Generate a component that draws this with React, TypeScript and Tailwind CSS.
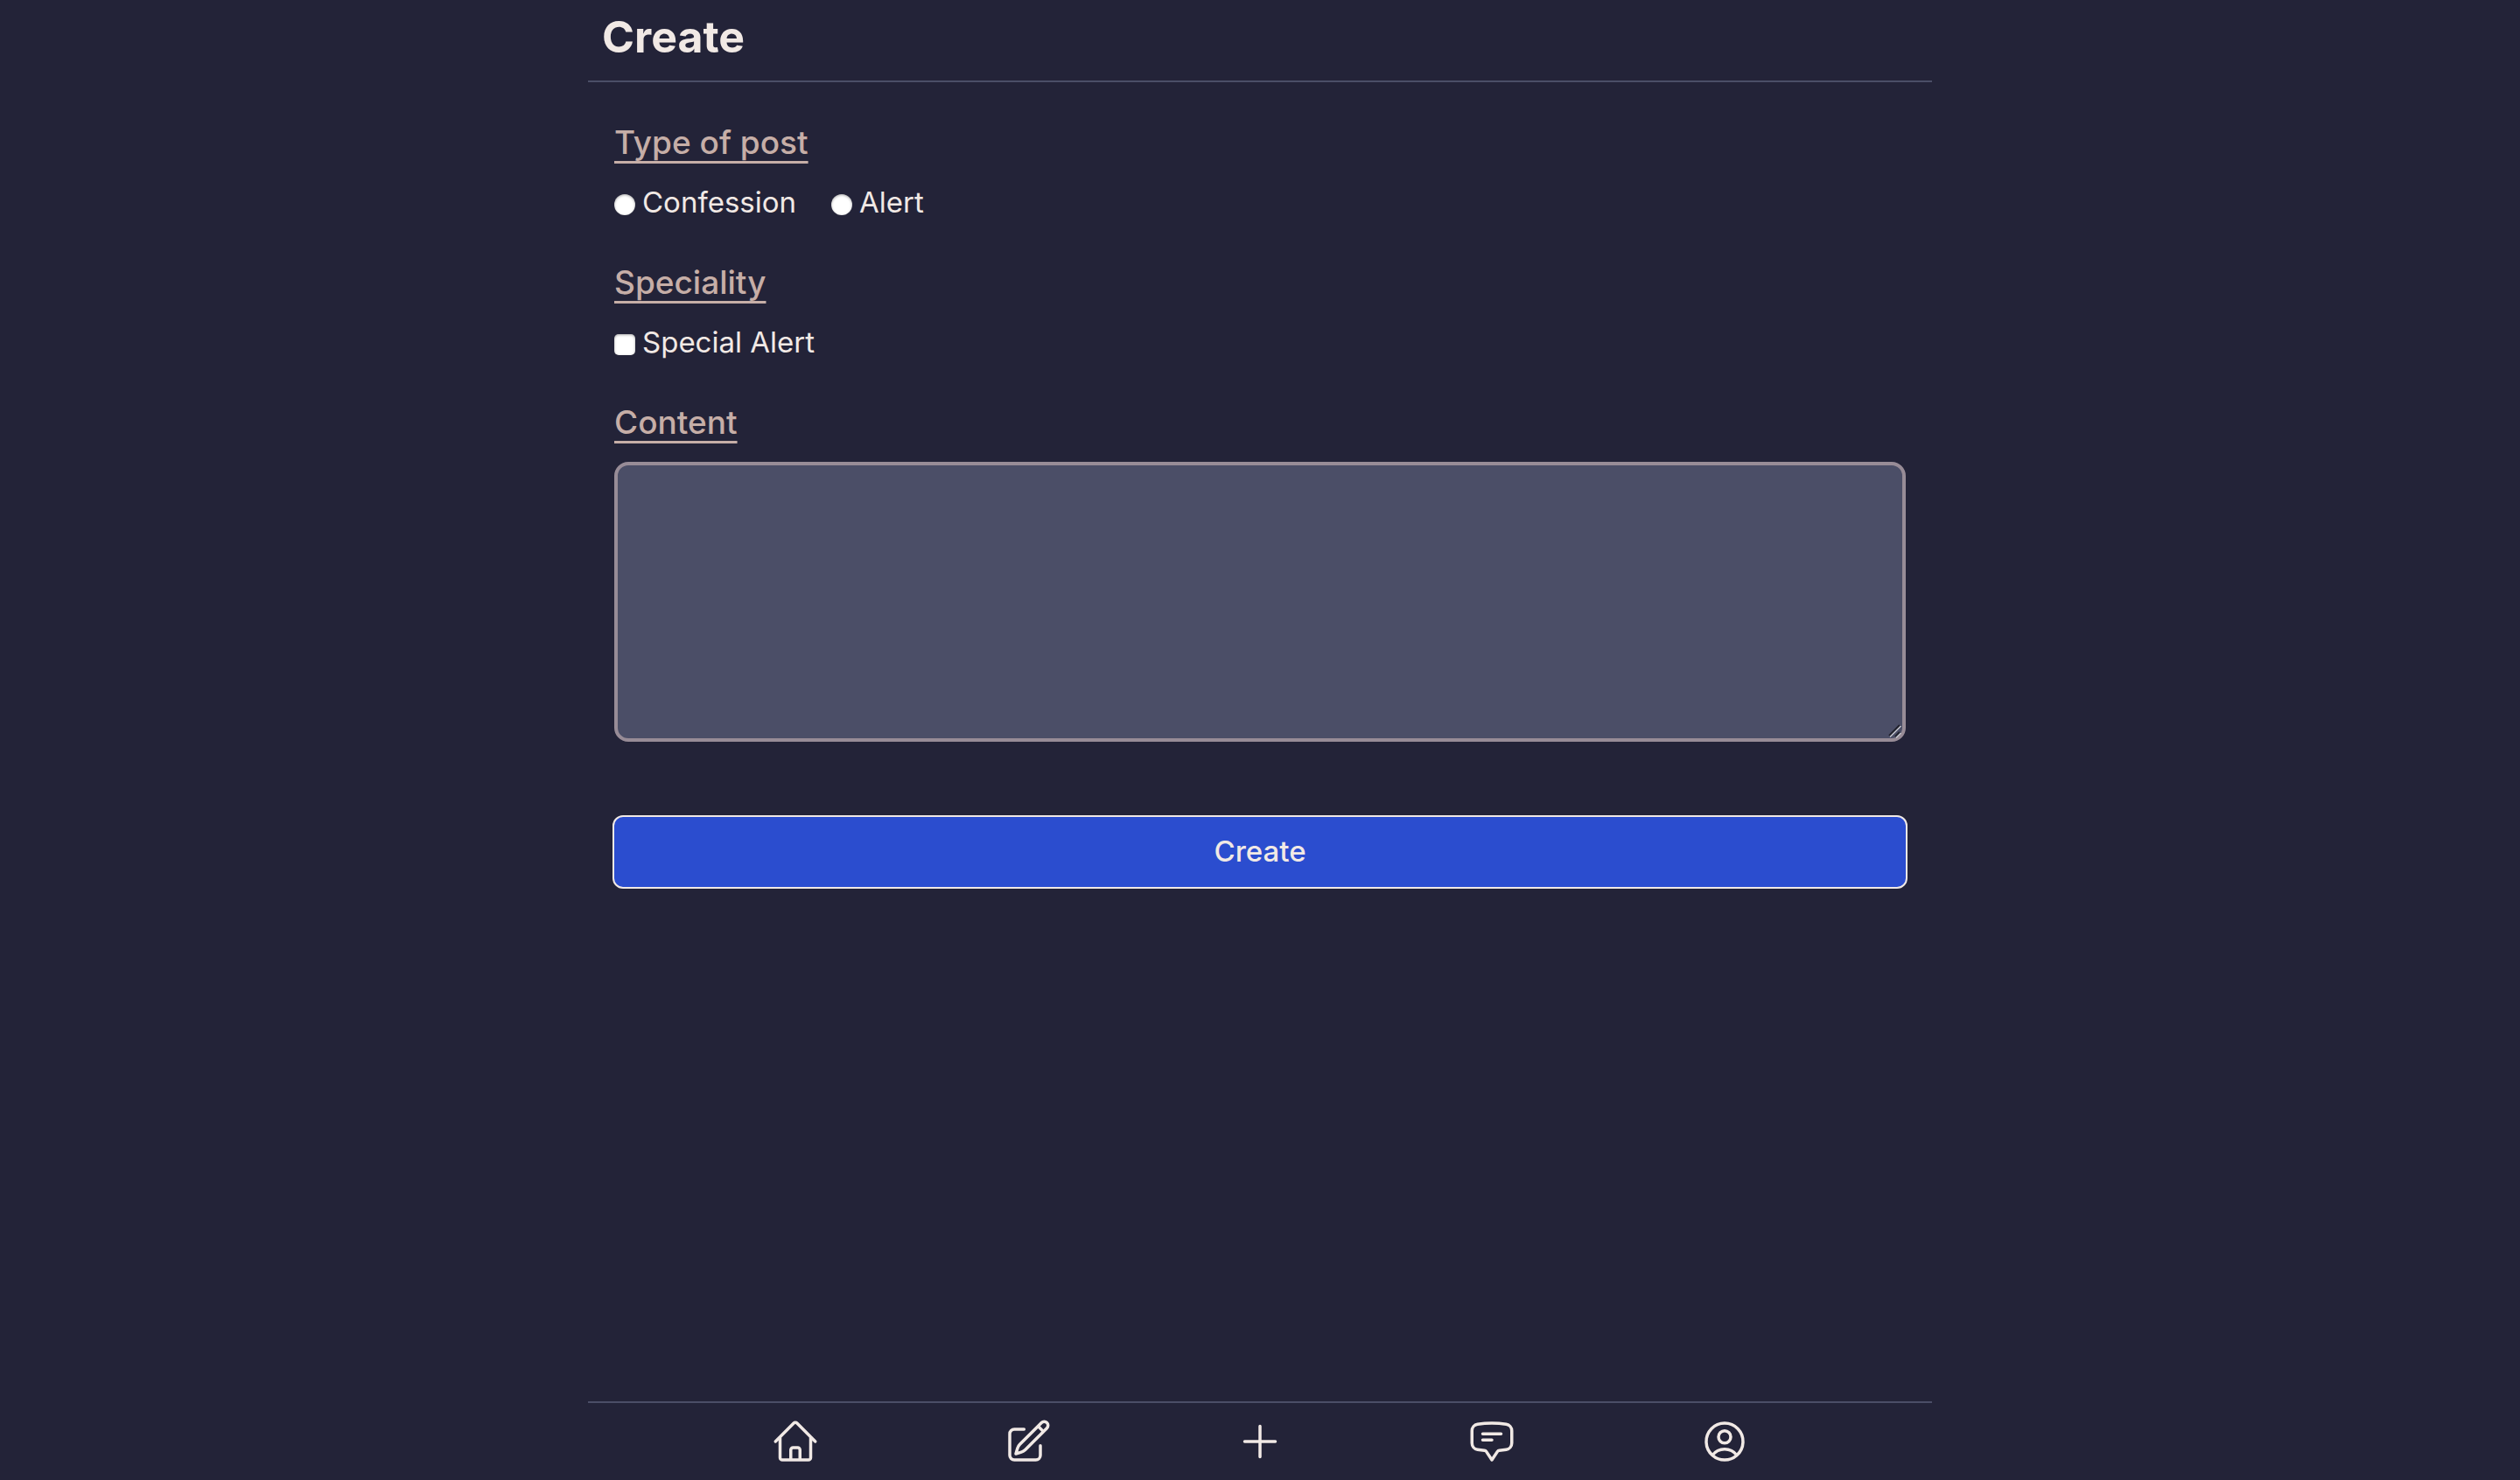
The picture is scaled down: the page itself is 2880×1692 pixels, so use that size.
import type { ReactNode } from "react";
import {
  HiOutlineChatBubbleBottomCenterText,
  HiOutlineHome,
  HiOutlinePencilSquare,
  HiOutlinePlus,
  HiOutlineUserCircle,
} from "react-icons/hi2";

const inputBase =
  "mt-1.5 size-6 shrink-0 appearance-none bg-white shadow-[inset_0_1px_3px_rgba(0,0,0,0.35)] checked:bg-[#2b4dcf]";

const links = [
  { label: "Home", href: "#home", Icon: HiOutlineHome },
  { label: "Write", href: "#write", Icon: HiOutlinePencilSquare },
  { label: "Create", href: "#create", Icon: HiOutlinePlus },
  { label: "Messages", href: "#messages", Icon: HiOutlineChatBubbleBottomCenterText },
  { label: "Profile", href: "#profile", Icon: HiOutlineUserCircle },
];

const headingClass =
  "mb-4 text-[37px] leading-[58px] font-medium text-[#c6aea7] underline decoration-[3px] underline-offset-8 [text-decoration-skip-ink:none]";

function Group({ title, children }: { title: string; children: ReactNode }) {
  return (
    <fieldset className="mx-0.5 mb-10">
      <legend className={headingClass}>{title}</legend>
      <div className="flex gap-10 text-[33px] leading-[46px]">{children}</div>
    </fieldset>
  );
}

export default function App() {
  return (
    <div className="min-h-screen bg-[#232338] font-['Inter',sans-serif] text-[#f1e9e5]">
      <div className="mx-auto flex min-h-screen max-w-[1536px] flex-col">
        <header className="border-b-2 border-[#4b4e67] px-4 pt-1.5 pb-3.5">
          <h1 className="text-[50px] leading-[72px] font-bold">Create</h1>
        </header>

        <form className="flex flex-col px-7 pt-10" onSubmit={(e) => e.preventDefault()}>
          <Group title="Type of post">
            <label className="flex items-center gap-2">
              <input type="radio" name="type" className={`rounded-full ${inputBase}`} />
              Confession
            </label>
            <label className="flex items-center gap-2">
              <input type="radio" name="type" className={`rounded-full ${inputBase}`} />
              Alert
            </label>
          </Group>

          <Group title="Speciality">
            <label className="flex items-center gap-2">
              <input type="checkbox" className={`rounded-[5px] ${inputBase}`} />
              Special Alert
            </label>
          </Group>

          <div className="mx-0.5 flex flex-col items-start">
            <label htmlFor="content" className={headingClass}>
              Content
            </label>
            <div className="relative h-80 w-full">
              <textarea
                id="content"
                className="block size-full resize-none rounded-2xl border-4 border-[#988c97] bg-[#4b4e67] p-4 text-[33px] leading-[46px] outline-none"
              />
              <svg
                className="pointer-events-none absolute right-1 bottom-1 size-4"
                viewBox="0 0 16 16"
                fill="none"
                aria-hidden="true"
              >
                <path d="M1 13 13 1M8 14l5-5" stroke="#20212c" strokeWidth="2" />
                <path d="M2 14.500 14.500 2M9 15.500l5.500-5.500" stroke="#c5c6cd" strokeWidth="1.5" />
              </svg>
            </div>
          </div>

          <button
            type="submit"
            className="mt-[84px] h-[84px] rounded-xl border-2 border-[#f1e9e5] bg-[#2b4dcf] pb-0.5 text-[33px] leading-[46px] font-medium"
          >
            Create
          </button>
        </form>

        <nav className="mt-auto flex justify-evenly border-t-2 border-[#4b4e67] py-4">
          {links.map(({ label, href, Icon }) => (
            <a key={label} href={href} aria-label={label}>
              <Icon className="size-14" />
            </a>
          ))}
        </nav>
      </div>
    </div>
  );
}
